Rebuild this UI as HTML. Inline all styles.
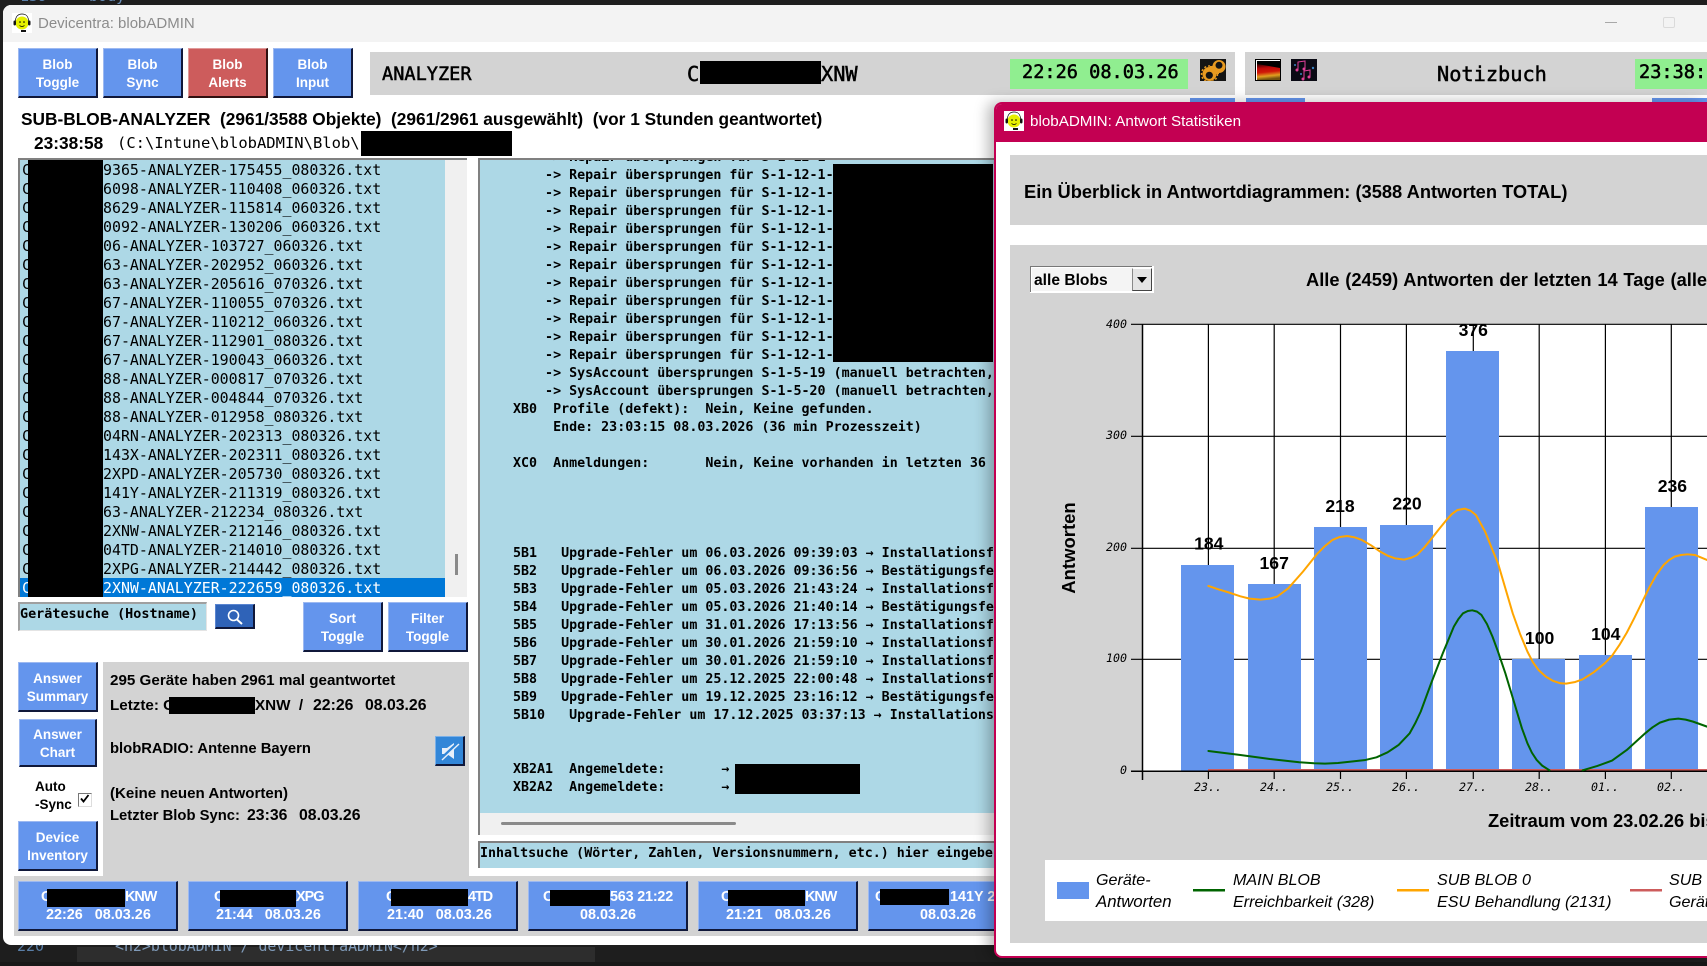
<!DOCTYPE html>
<html><head><meta charset="utf-8"><title>Devicentra: blobADMIN</title>
<style>
html,body{margin:0;padding:0;width:1707px;height:966px;overflow:hidden;background:#1e1e1e}
*{box-sizing:border-box}
.a{position:absolute}
.t{position:absolute;white-space:pre;line-height:20px;font-family:"Liberation Sans",sans-serif;font-weight:bold;color:#000}
.m{font-family:"DejaVu Sans Mono",monospace}
.b{position:absolute;background:#6495ed;border-top:1px solid #9db9f1;border-left:1px solid #9db9f1;border-right:2px solid #10183a;border-bottom:2px solid #10183a;color:#fff;text-align:center;font:bold 13.5px/18px "Liberation Sans",sans-serif;white-space:pre;display:flex;align-items:center;justify-content:center;padding-top:2px}
.r{position:absolute;background:#000}
.w{color:#fff}
.n{font-size:14.4px;color:#fff}
.h{font-size:18.6px;font-weight:normal;-webkit-text-stroke:.5px #000}
</style></head><body>
<!-- background editor -->
<div class="t m" style="left:20px;top:-14px;color:#5a7fa8;font-weight:normal;font-size:15px">139</div>
<div class="t m" style="left:80px;top:-14px;color:#6a8fb8;font-weight:normal;font-size:15px">&lt;body&gt;</div>
<div class="a" style="left:77px;top:947px;width:518px;height:15px;background:#2d2d2d"></div>
<div class="a" style="left:0;top:962px;width:1707px;height:4px;background:#181818"></div>
<div class="t m" style="left:17px;top:936px;color:#5a7fa8;font-weight:normal;font-size:15px">220</div>
<div class="t m" style="left:115px;top:936px;color:#7f9ab8;font-weight:normal;font-size:14.900px">&lt;h2&gt;blobADMIN / devicentraADMIN&lt;/h2&gt;</div>

<!-- main window -->
<div class="a" style="left:3px;top:5px;width:1704px;height:940px;background:#fff;border-radius:8px 0 0 8px;overflow:hidden">
  <div class="a" style="left:0;top:0;width:1704px;height:37px;background:#f3f3f3"></div>
</div>
<svg class="a" style="left:12px;top:13px" width="20" height="20" viewBox="0 0 20 20"><rect width="20" height="20" fill="#fff"/><path d="M3.500 8C3.500 3.500 6 1 10 1S16.500 3.500 16.500 8" fill="none" stroke="#000" stroke-width=".7"/><circle cx="10" cy="10" r="6.500" fill="#e6f000"/><rect x="1.500" y="7.500" width="2.500" height="5" rx="1.200" fill="#111"/><rect x="16" y="7.500" width="2.500" height="5" rx="1.200" fill="#111"/><circle cx="8" cy="9" r=".8"/><circle cx="12" cy="9" r=".8"/><path d="M7.500 12.500Q10 14.500 12.500 12.500" fill="none" stroke="#000" stroke-width=".7"/><rect x="9" y="17" width="5" height="2" fill="#111"/></svg>
<div class="t" style="left:38px;top:14px;font-weight:normal;font-size:15px;color:#8c8c8c">Devicentra: blobADMIN</div>
<div class="a" style="left:1605px;top:22px;width:12px;height:1px;background:#a8a8a8"></div>
<div class="a" style="left:1663px;top:17px;width:12px;height:11px;border:1px solid #dadada;border-radius:2px"></div>

<!-- top buttons -->
<div class="b" style="left:18px;top:48px;width:80px;height:50px">Blob
Toggle</div>
<div class="b" style="left:103px;top:48px;width:80px;height:50px">Blob
Sync</div>
<div class="b" style="left:188px;top:48px;width:80px;height:50px;background:#cd5c5c;border-top-color:#e09a9a;border-left-color:#e09a9a;border-right-color:#301010;border-bottom-color:#301010">Blob
Alerts</div>
<div class="b" style="left:273px;top:48px;width:80px;height:50px">Blob
Input</div>

<!-- analyzer bar -->
<div class="a" style="left:370px;top:52px;width:865px;height:43px;background:#d3d3d3"></div>
<div class="t m h" style="left:382px;top:65px">ANALYZER</div>
<div class="t m h" style="left:687px;top:64px;font-size:20.3px">C</div>
<div class="r" style="left:700px;top:61px;width:121px;height:23px"></div>
<div class="t m h" style="left:821px;top:64px;font-size:20.3px">XNW</div>
<div class="a" style="left:1010px;top:59px;width:178px;height:30px;background:#90ee90"></div>
<div class="t m h" style="left:1022px;top:63px">22:26 08.03.26</div>
<svg class="a" style="left:1200px;top:59px" width="26" height="22" viewBox="0 0 26 22"><rect width="26" height="22" fill="#141414"/><circle cx="9.500" cy="15" r="7" fill="#e89a20"/><circle cx="19" cy="7.500" r="6.500" fill="#e89a20"/><rect x="10" y="7" width="9" height="8" fill="#e89a20"/><circle cx="9.500" cy="15" r="8" fill="none" stroke="#e89a20" stroke-width="1.500" stroke-dasharray="2 2"/><circle cx="9.300" cy="16.300" r="3.600" fill="#141414"/><circle cx="19" cy="6.300" r="3.500" fill="#141414"/></svg>

<div class="a" style="left:1245px;top:52px;width:462px;height:43px;background:#d3d3d3"></div>
<svg class="a" style="left:1255px;top:59px" width="26" height="22" viewBox="0 0 26 22"><defs><linearGradient id="fl" x1="0" y1="0" x2=".15" y2="1"><stop offset="0" stop-color="#2a0000"/><stop offset=".3" stop-color="#c00808"/><stop offset=".55" stop-color="#d01808"/><stop offset=".8" stop-color="#e0a020"/><stop offset="1" stop-color="#705010"/></linearGradient></defs><rect width="26" height="22" fill="#000"/><rect x="1" y="1" width="24" height="1" fill="#fff"/><rect x="1" y="1" width="1" height="20" fill="#fff"/><path d="M2 5L25 9V21H2Z" fill="url(#fl)"/></svg>
<svg class="a" style="left:1291px;top:59px" width="26" height="22" viewBox="0 0 26 22"><rect width="26" height="22" fill="#0a0a14"/><path d="M7 5L7 3 14 2V10M7 5V11M13 14L13 12 19 11V18M13 14V20" fill="none" stroke="#e0409a" stroke-width="1"/><circle cx="6" cy="11" r="1.500" fill="#e0409a"/><circle cx="13" cy="10" r="1.500" fill="#e0409a"/><circle cx="12" cy="20" r="1.500" fill="#e0409a"/><circle cx="18" cy="18" r="1.500" fill="#e0409a"/><circle cx="4" cy="6" r="1" fill="#3a80c0"/><circle cx="22" cy="9" r="1.200" fill="#3a80c0"/><circle cx="10" cy="15" r="1" fill="#3a80c0"/></svg>
<div class="t m h" style="left:1437px;top:64px;font-size:20.3px">Notizbuch</div>
<div class="a" style="left:1635px;top:59px;width:72px;height:30px;background:#90ee90"></div>
<div class="t m h" style="left:1639px;top:63px">23:38:58</div>
<div class="a" style="left:1190px;top:98px;width:45px;height:6px;background:#6495ed"></div>
<div class="a" style="left:1246px;top:98px;width:59px;height:6px;background:#6495ed"></div>
<div class="a" style="left:1652px;top:98px;width:55px;height:6px;background:#6495ed"></div>

<!-- headers -->
<div class="t" style="left:21px;top:109px;font-size:17.3px">SUB-BLOB-ANALYZER  (2961/3588 Objekte)  (2961/2961 ausgewählt)  (vor 1 Stunden geantwortet)</div>
<div class="t" style="left:34px;top:133px;font-size:17.3px">23:38:58</div>
<div class="t m" style="left:117px;top:133px;font-size:15.5px;font-weight:normal">(C:\Intune\blobADMIN\Blob\</div>
<div class="r" style="left:361px;top:131px;width:151px;height:25px"></div>

<!-- list -->
<div class="a" style="left:18px;top:158px;width:449px;height:439px;background:#f0f0f0;border-top:2px solid #808080;border-left:2px solid #808080"></div>
<div class="a" style="left:20px;top:160px;width:425px;height:437px;background:#add8e6"></div>
<div class="a" style="left:20px;top:578px;width:425px;height:19px;background:#0078d7"></div>
<div class="a" style="left:455px;top:554px;width:3px;height:21px;background:#8a8a8a"></div>
<div class="t m" style="left:22px;top:161px;font-size:14.92px;line-height:19px;font-weight:normal">C
C
C
C
C
C
C
C
C
C
C
C
C
C
C
C
C
C
C
C
C
C
<span class="w">C</span></div>
<div class="t m" style="left:103px;top:161px;font-size:14.92px;line-height:19px;font-weight:normal">9365-ANALYZER-175455_080326.txt
6098-ANALYZER-110408_060326.txt
8629-ANALYZER-115814_060326.txt
0092-ANALYZER-130206_060326.txt
06-ANALYZER-103727_060326.txt
63-ANALYZER-202952_060326.txt
63-ANALYZER-205616_070326.txt
67-ANALYZER-110055_070326.txt
67-ANALYZER-110212_060326.txt
67-ANALYZER-112901_080326.txt
67-ANALYZER-190043_060326.txt
88-ANALYZER-000817_070326.txt
88-ANALYZER-004844_070326.txt
88-ANALYZER-012958_080326.txt
04RN-ANALYZER-202313_080326.txt
143X-ANALYZER-202311_080326.txt
2XPD-ANALYZER-205730_080326.txt
141Y-ANALYZER-211319_080326.txt
63-ANALYZER-212234_080326.txt
2XNW-ANALYZER-212146_080326.txt
04TD-ANALYZER-214010_080326.txt
2XPG-ANALYZER-214442_080326.txt
<span class="w">2XNW-ANALYZER-222659_080326.txt</span></div>
<div class="r" style="left:28px;top:160px;width:75px;height:437px"></div>

<!-- search -->
<div class="a" style="left:18px;top:602px;width:189px;height:29px;background:#add8e6;border-top:2px solid #a0a0a0;border-left:2px solid #a0a0a0;border-right:1px solid #e4e4e4;border-bottom:1px solid #e4e4e4"></div>
<div class="t m" style="left:20px;top:604px;font-size:13.45px;padding-top:1px">Gerätesuche (Hostname)</div>
<div class="a" style="left:215px;top:604px;width:40px;height:25px;background:#2f63b8;border-right:2px solid #10183a;border-bottom:2px solid #10183a;border-top:1px solid #5a85d0;border-left:1px solid #5a85d0"></div>
<svg class="a" style="left:227px;top:609px" width="17" height="16" viewBox="0 0 17 16"><circle cx="6.500" cy="6.500" r="5" fill="none" stroke="#fff" stroke-width="1.600"/><path d="M10 10.500L15 15" stroke="#fff" stroke-width="2"/></svg>
<div class="b" style="left:303px;top:602px;width:80px;height:50px">Sort
Toggle</div>
<div class="b" style="left:388px;top:602px;width:80px;height:50px">Filter
Toggle</div>

<!-- left buttons -->
<div class="b" style="left:18px;top:662px;width:80px;height:50px">Answer
Summary</div>
<div class="b" style="left:19px;top:719px;width:78px;height:48px">Answer
Chart</div>
<div class="t" style="left:35px;top:777px;font-size:13.5px">Auto</div>
<div class="t" style="left:35px;top:795px;font-size:13.5px">-Sync</div>
<div class="a" style="left:78px;top:793px;width:14px;height:14px;background:#fff;border-top:1px solid #777;border-left:1px solid #777;border-right:1px solid #ddd;border-bottom:1px solid #ddd"></div>
<svg class="a" style="left:80px;top:794px" width="10" height="10" viewBox="0 0 10 10"><path d="M1 4.500L3.500 7.500 8.500 1" fill="none" stroke="#000" stroke-width="1.800"/></svg>
<div class="b" style="left:18px;top:821px;width:80px;height:50px">Device
Inventory</div>

<!-- gray panel -->
<div class="a" style="left:103px;top:662px;width:366px;height:214px;background:#d3d3d3"></div>
<div class="t" style="left:110px;top:671px;font-size:15.2px">295 Geräte haben 2961 mal geantwortet</div>
<div class="t" style="left:110px;top:696px;font-size:15.2px">Letzte: C</div>
<div class="r" style="left:169px;top:697px;width:86px;height:17px"></div>
<div class="t" style="left:255px;top:696px;font-size:15.2px">XNW  /</div>
<div class="t" style="left:313px;top:696px;font-size:15.8px">22:26</div>
<div class="t" style="left:365px;top:696px;font-size:15.8px">08.03.26</div>
<div class="t" style="left:110px;top:739px;font-size:14.8px">blobRADIO: Antenne Bayern</div>
<div class="t" style="left:110px;top:784px;font-size:15.1px">(Keine neuen Antworten)</div>
<div class="t" style="left:110px;top:806px;font-size:14.8px">Letzter Blob Sync:</div>
<div class="t" style="left:247px;top:806px;font-size:15.8px">23:36</div>
<div class="t" style="left:299px;top:806px;font-size:15.8px">08.03.26</div>
<div class="a" style="left:435px;top:736px;width:30px;height:30px;background:#3286d8;border-top:1px solid #7ab0e8;border-left:1px solid #7ab0e8;border-right:2px solid #10183a;border-bottom:2px solid #10183a"></div>
<svg class="a" style="left:441px;top:741px" width="20" height="20" viewBox="0 0 20 20"><path d="M1 7H6L13 2V18L6 13H1Z" fill="#e8f0fa"/><path d="M1 17L17 2" stroke="#3286d8" stroke-width="3"/><path d="M1 19L18 3" stroke="#e8f0fa" stroke-width="1.500"/></svg>

<!-- text view -->
<div class="a" style="left:478px;top:158px;width:530px;height:677px;background:#f0f0f0;border-top:2px solid #808080;border-left:2px solid #808080"></div>
<div class="a" style="left:480px;top:160px;width:528px;height:653px;background:#add8e6;overflow:hidden">
<div class="t m" style="left:33px;top:-11px;font-size:13.32px;line-height:18px">    -&gt; Repair übersprungen für S-1-12-1-
    -&gt; Repair übersprungen für S-1-12-1-
    -&gt; Repair übersprungen für S-1-12-1-
    -&gt; Repair übersprungen für S-1-12-1-
    -&gt; Repair übersprungen für S-1-12-1-
    -&gt; Repair übersprungen für S-1-12-1-
    -&gt; Repair übersprungen für S-1-12-1-
    -&gt; Repair übersprungen für S-1-12-1-
    -&gt; Repair übersprungen für S-1-12-1-
    -&gt; Repair übersprungen für S-1-12-1-
    -&gt; Repair übersprungen für S-1-12-1-
    -&gt; Repair übersprungen für S-1-12-1-
    -&gt; SysAccount übersprungen S-1-5-19 (manuell betrachten,
    -&gt; SysAccount übersprungen S-1-5-20 (manuell betrachten,
XB0  Profile (defekt):  Nein, Keine gefunden.
     Ende: 23:03:15 08.03.2026 (36 min Prozesszeit)

XC0  Anmeldungen:       Nein, Keine vorhanden in letzten 36 (




5B1   Upgrade-Fehler um 06.03.2026 09:39:03 → Installationsfehler
5B2   Upgrade-Fehler um 06.03.2026 09:36:56 → Bestätigungsfehler
5B3   Upgrade-Fehler um 05.03.2026 21:43:24 → Installationsfehler
5B4   Upgrade-Fehler um 05.03.2026 21:40:14 → Bestätigungsfehler
5B5   Upgrade-Fehler um 31.01.2026 17:13:56 → Installationsfehler
5B6   Upgrade-Fehler um 30.01.2026 21:59:10 → Installationsfehler
5B7   Upgrade-Fehler um 30.01.2026 21:59:10 → Installationsfehler
5B8   Upgrade-Fehler um 25.12.2025 22:00:48 → Installationsfehler
5B9   Upgrade-Fehler um 19.12.2025 23:16:12 → Bestätigungsfehler
5B10   Upgrade-Fehler um 17.12.2025 03:37:13 → Installationsfehler


XB2A1  Angemeldete:       →
XB2A2  Angemeldete:       →</div>
</div>
<div class="r" style="left:833px;top:164px;width:160px;height:198px"></div>
<div class="r" style="left:735px;top:764px;width:125px;height:30px"></div>
<div class="a" style="left:501px;top:822px;width:235px;height:3px;background:#8a8a8a;border-radius:2px"></div>
<div class="a" style="left:478px;top:841px;width:530px;height:27px;background:#add8e6;border-top:2px solid #808080;border-left:2px solid #808080"></div>
<div class="t m" style="left:480px;top:844px;font-size:13.32px">Inhaltsuche (Wörter, Zahlen, Versionsnummern, etc.) hier eingeben</div>

<!-- bottom bar -->
<div class="a" style="left:14px;top:876px;width:994px;height:60px;background:#d3d3d3"></div>
<div class="b" style="left:18px;top:881px;width:160px;height:50px"></div>
<div class="b" style="left:188px;top:881px;width:160px;height:50px"></div>
<div class="b" style="left:358px;top:881px;width:160px;height:50px"></div>
<div class="b" style="left:528px;top:881px;width:160px;height:50px"></div>
<div class="b" style="left:698px;top:881px;width:160px;height:50px"></div>
<div class="b" style="left:868px;top:881px;width:160px;height:50px"></div>
<div class="t n" style="left:41px;top:887px">C</div><div class="t n" style="left:125px;top:887px;letter-spacing:-1px">KNW</div>
<div class="t n" style="left:214px;top:887px">C</div><div class="t n" style="left:296px;top:887px;letter-spacing:-1px">XPG</div>
<div class="t n" style="left:386px;top:887px">C</div><div class="t n" style="left:468px;top:887px;letter-spacing:-1px">4TD</div>
<div class="t n" style="left:543px;top:887px">C</div><div class="t n" style="left:610px;top:887px;letter-spacing:-.2px">563 21:22</div>
<div class="t n" style="left:721px;top:887px">C</div><div class="t n" style="left:805px;top:887px;letter-spacing:-1px">KNW</div>
<div class="t n" style="left:875px;top:887px">C</div><div class="t n" style="left:950px;top:887px">141Y 21:1</div>
<div class="t n" style="left:46px;top:905px">22:26   08.03.26</div>
<div class="t n" style="left:216px;top:905px">21:44   08.03.26</div>
<div class="t n" style="left:387px;top:905px">21:40   08.03.26</div>
<div class="t n" style="left:580px;top:905px">08.03.26</div>
<div class="t n" style="left:726px;top:905px">21:21   08.03.26</div>
<div class="t n" style="left:920px;top:905px">08.03.26</div>
<div class="r" style="left:47px;top:889px;width:78px;height:18px"></div>
<div class="r" style="left:220px;top:890px;width:76px;height:17px"></div>
<div class="r" style="left:391px;top:889px;width:77px;height:17px"></div>
<div class="r" style="left:550px;top:890px;width:60px;height:16px"></div>
<div class="r" style="left:728px;top:890px;width:77px;height:16px"></div>
<div class="r" style="left:880px;top:889px;width:69px;height:16px"></div>

<!-- stats window -->
<div class="a" style="left:994px;top:102px;width:713px;height:856px;background:#fff;border:2px solid #c30052;border-right:0;border-radius:8px 0 0 8px;box-shadow:-6px 0 14px rgba(0,0,0,.28);overflow:hidden">
  <div class="a" style="left:-2px;top:-2px;width:720px;height:40px;background:#c30052"></div>
</div>
<svg class="a" style="left:1004px;top:111px" width="20" height="20" viewBox="0 0 20 20"><rect width="20" height="20" fill="#fff"/><path d="M3.500 8C3.500 3.500 6 1 10 1S16.500 3.500 16.500 8" fill="none" stroke="#000" stroke-width=".7"/><circle cx="10" cy="10" r="6.500" fill="#e6f000"/><rect x="1.500" y="7.500" width="2.500" height="5" rx="1.200" fill="#111"/><rect x="16" y="7.500" width="2.500" height="5" rx="1.200" fill="#111"/><circle cx="8" cy="9" r=".8"/><circle cx="12" cy="9" r=".8"/><path d="M7.500 12.500Q10 14.500 12.500 12.500" fill="none" stroke="#000" stroke-width=".7"/><rect x="9" y="17" width="5" height="2" fill="#111"/></svg>
<div class="t w" style="left:1030px;top:112px;font-weight:normal;font-size:15.2px">blobADMIN: Antwort Statistiken</div>
<div class="a" style="left:1010px;top:155px;width:697px;height:70px;background:#d3d3d3"></div>
<div class="t" style="left:1024px;top:182px;font-size:18.3px">Ein Überblick in Antwortdiagrammen: (3588 Antworten TOTAL)</div>
<div class="a" style="left:1010px;top:245px;width:697px;height:698px;background:#d3d3d3"></div>
<div class="a" style="left:1030px;top:266px;width:124px;height:27px;background:#f4f4f4;border:2px solid #fff"></div>
<div class="a" style="left:1030px;top:266px;width:122px;height:26px;border-top:1px solid #777;border-left:1px solid #777"></div>
<div class="a" style="left:1132px;top:268px;width:20px;height:23px;background:#e4e4e4;border-left:1px solid #888;border-right:1px solid #444;border-bottom:1px solid #444;border-top:1px solid #fff"></div>
<svg class="a" style="left:1137px;top:276px" width="10" height="8" viewBox="0 0 10 8"><path d="M0 1H10L5 7Z" fill="#000"/></svg>
<div class="t" style="left:1034px;top:271px;font-size:15.6px">alle Blobs</div>
<div class="t" style="left:1306px;top:270px;font-size:18.3px;word-spacing:.7px">Alle (2459) Antworten der letzten 14 Tage (alle Blobs)</div>

<!-- chart -->
<svg class="a" style="left:0;top:0" width="1707" height="966" viewBox="0 0 1707 966">
<rect x="1142" y="324" width="565" height="447" fill="#fff"/>
<g stroke="#000" stroke-width="1.200">
<path d="M1131 324.300H1707M1131 436.300H1707M1131 548.300H1707M1131 659.300H1707"/>
<path d="M1208.400 324V779M1274.200 324V779M1340.500 324V779M1406.400 324V779M1473.300 324V779M1539.200 324V779M1605.400 324V779M1671.300 324V779"/>
</g>
<g fill="#6495ed">
<rect x="1181" y="565" width="53" height="206"/>
<rect x="1248" y="584" width="53" height="187"/>
<rect x="1314" y="527" width="53" height="244"/>
<rect x="1380" y="525" width="53" height="246"/>
<rect x="1446" y="351" width="53" height="420"/>
<rect x="1512" y="659" width="53" height="112"/>
<rect x="1579" y="655" width="53" height="116"/>
<rect x="1645" y="507" width="53" height="264"/>
</g>
<path d="M1208 770H1707" stroke="#cd5c5c" stroke-width="2"/>
<path d="M1131 771.300H1707M1142.500 324V780" stroke="#000" stroke-width="1.500"/>
<g transform="translate(1130,310) scale(.368,.3333)" fill="none" stroke-linejoin="round" stroke-linecap="round">
<polyline vector-effect="non-scaling-stroke" stroke="#ffa500" stroke-width="2" points="213,828 240,838 270,848 300,859 325,866 355,869 380,866 400,860 430,835 470,785 510,730 530,708 550,690 570,681 590,678 610,682 630,690 655,706 680,725 700,737 720,745 745,749 765,743 780,735 800,712 820,685 840,657 860,630 875,612 890,600 910,596 925,602 940,615 965,665 985,720 1000,760 1020,835 1040,910 1060,972 1080,1025 1095,1057 1110,1080 1130,1100 1150,1113 1170,1120 1185,1121 1210,1116 1230,1108 1260,1087 1290,1060 1310,1037 1330,1005 1350,968 1370,925 1390,880 1410,835 1430,795 1450,765 1465,750 1480,740 1497,735 1515,733 1535,735 1568,750"/>
<polyline vector-effect="non-scaling-stroke" stroke="#006400" stroke-width="2" points="213,1323 300,1335 380,1347 460,1357 500,1360 530,1361 565,1359 600,1355 640,1350 670,1342 700,1327 730,1305 760,1270 775,1240 790,1205 805,1160 820,1115 850,1030 880,950 892,928 905,910 918,903 930,901 943,905 955,915 970,942 985,980 1000,1025 1020,1090 1035,1145 1050,1200 1065,1255 1080,1300 1092,1328 1105,1350 1120,1367 1140,1381"/>
<polyline vector-effect="non-scaling-stroke" stroke="#006400" stroke-width="2" points="1230,1381 1270,1368 1310,1352 1350,1320 1375,1295 1400,1270 1420,1252 1440,1238 1465,1229 1490,1226 1510,1229 1530,1235 1568,1250"/>
</g>
<g font-family="Liberation Sans,sans-serif" font-weight="bold" font-size="17.6" text-anchor="middle">
<text x="1208.800" y="549.500">184</text>
<text x="1274.200" y="569">167</text>
<text x="1340" y="512">218</text>
<text x="1407" y="509.500">220</text>
<text x="1473.300" y="336">376</text>
<text x="1539.600" y="644">100</text>
<text x="1605.800" y="640">104</text>
<text x="1672.400" y="492">236</text>
</g>
<g font-family="DejaVu Sans Mono,monospace" font-style="italic" font-size="11.6" fill="#000">
<g text-anchor="end">
<text x="1127" y="328">400</text><text x="1127" y="439">300</text><text x="1127" y="551">200</text><text x="1127" y="662">100</text><text x="1127" y="774">0</text>
</g>
<g text-anchor="middle">
<text x="1208" y="791">23..</text><text x="1274" y="791">24..</text><text x="1340" y="791">25..</text><text x="1406" y="791">26..</text><text x="1473" y="791">27..</text><text x="1539" y="791">28..</text><text x="1605" y="791">01..</text><text x="1671" y="791">02..</text>
</g>
</g>
<text transform="translate(1075,548) rotate(-90)" text-anchor="middle" font-family="Liberation Sans,sans-serif" font-weight="bold" font-size="18.5">Antworten</text>
<text x="1488" y="827" font-family="Liberation Sans,sans-serif" font-weight="bold" font-size="18.3">Zeitraum vom 23.02.26 bis 08.03.26</text>
<rect x="1045" y="860" width="662" height="61" fill="#fff"/>
<rect x="1057" y="882" width="32" height="17" fill="#6495ed"/>
<rect x="1193" y="889" width="32" height="2.500" fill="#006400"/>
<rect x="1397" y="889" width="32" height="2.500" fill="#ffa500"/>
<rect x="1630" y="889" width="32" height="2.500" fill="#cd5c5c"/>
<g font-family="Liberation Sans,sans-serif" font-style="italic" font-size="16.1">
<text x="1096" y="885">Geräte-</text><text x="1096" y="907" font-size="16.8">Antworten</text>
<text x="1233" y="885">MAIN BLOB</text><text x="1233" y="907">Erreichbarkeit (328)</text>
<text x="1437" y="885">SUB BLOB 0</text><text x="1437" y="907">ESU Behandlung (2131)</text>
<text x="1669" y="885">SUB BLOB 1</text><text x="1669" y="907">Geräte</text>
</g>
</svg>
</body></html>
